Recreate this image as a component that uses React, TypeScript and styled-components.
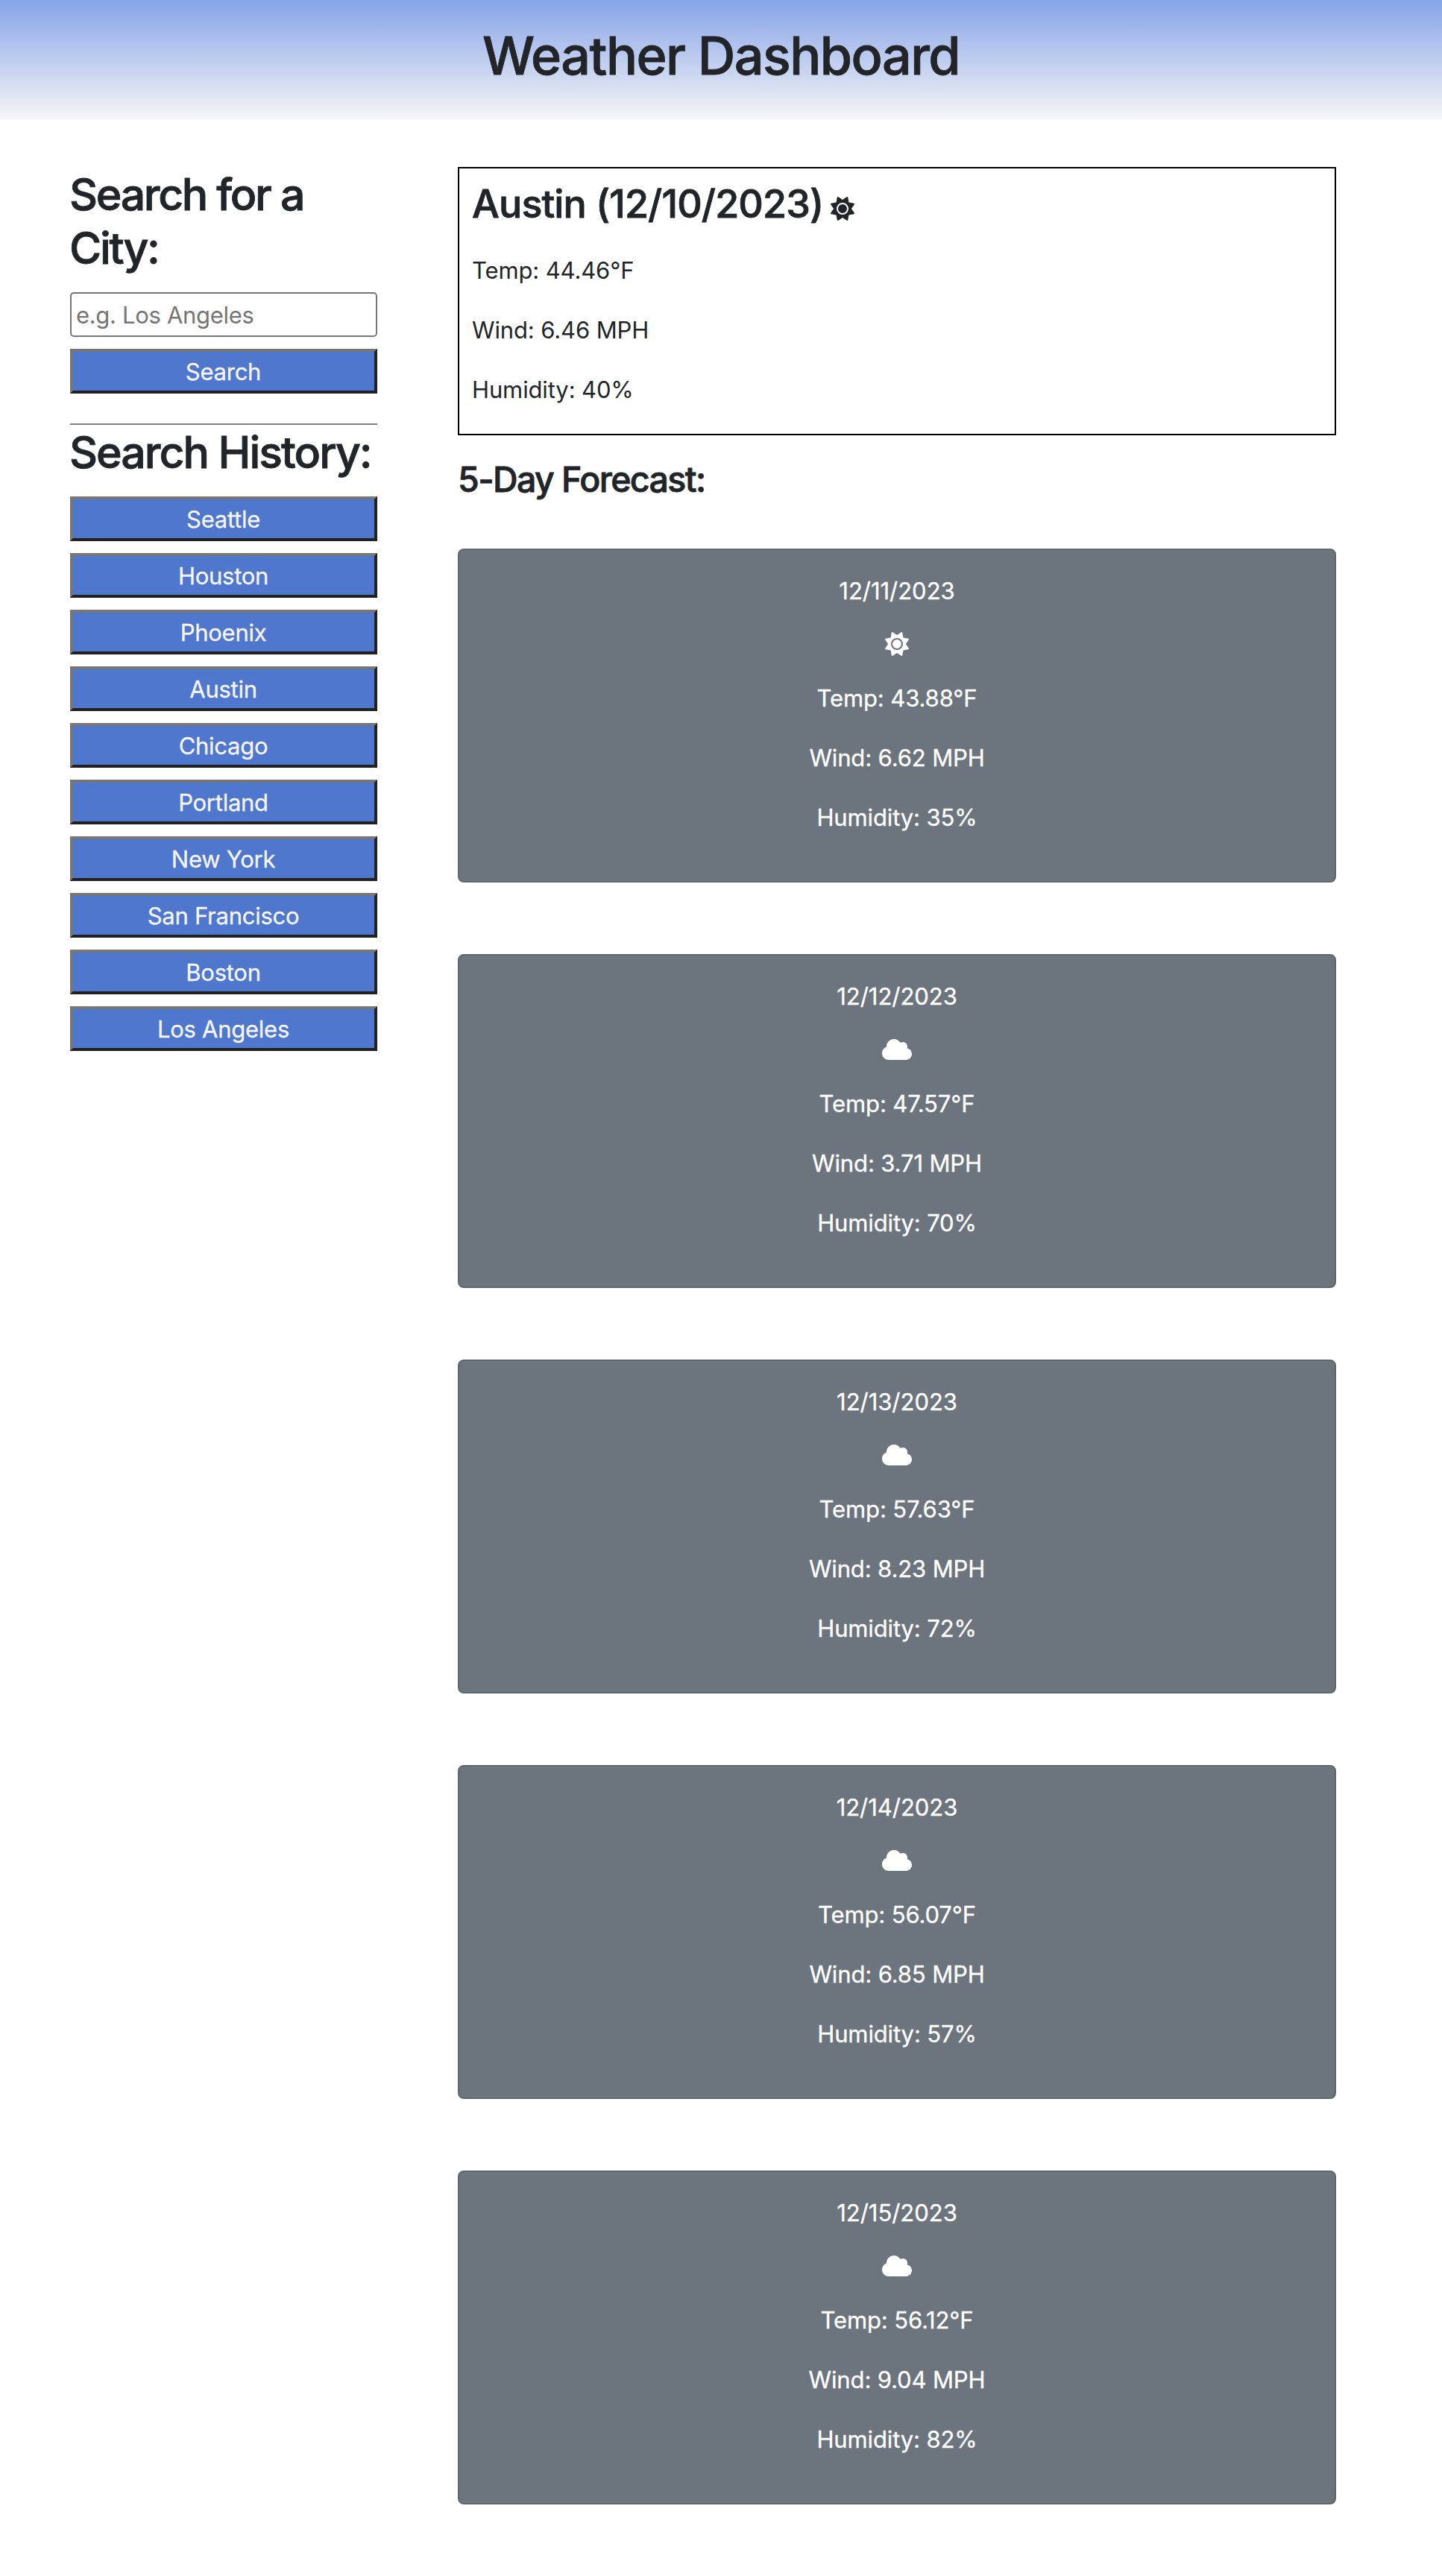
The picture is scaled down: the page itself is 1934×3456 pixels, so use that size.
import React from "react";
import styled, { createGlobalStyle } from "styled-components";
import { FaCloud, FaSun } from "react-icons/fa6";

const GlobalStyle = createGlobalStyle`
  *, *::before, *::after { box-sizing: border-box; }
  body {
    margin: 0;
    background: #fff;
    color: #212529;
    font-family: Inter, "Liberation Sans", sans-serif;
    font-size: 31px;
    font-weight: 400;
  }
  h1, h2, h3, h4, p { margin: 0; }
  h1, h2, h3, h4 {
    font-weight: 500;
    -webkit-text-stroke: 0.8px currentColor;
  }
`;

const Header = styled.header`
  display: flex;
  align-items: center;
  justify-content: center;
  height: 160px;
  padding-bottom: 11px;
  background: linear-gradient(to bottom, #87a4e8, #f5f5f5);
`;

const PageTitle = styled.h1`
  font-size: 70px;
  line-height: 84px;
  letter-spacing: -1.53px;
`;

const Layout = styled.div`
  display: grid;
  grid-template-columns: 412px 1178px;
  column-gap: 108px;
  align-items: start;
  padding: 64px 0 96px 94px;
`;

const Sidebar = styled.aside`
  display: flex;
  flex-direction: column;
`;

const SideHeading = styled.h2<{ $tracking: number }>`
  margin: 0 -10px 23px -1px;
  padding-top: 1px;
  font-size: 59px;
  line-height: 72px;
  letter-spacing: ${(p) => p.$tracking}px;
`;

const CityInput = styled.input`
  height: 60px;
  margin: 0 0 16px;
  padding: 0 6px;
  border: 2px solid #767676;
  border-radius: 5px;
  background: #fff;
  font: inherit;
  letter-spacing: -0.32px;
  &::placeholder { color: #757575; opacity: 1; }
`;

const CityButton = styled.button`
  height: 60px;
  padding: 0 1px 0 0;
  border: 4px solid;
  border-color: #767676 #212121 #212121 #767676;
  border-radius: 0;
  background: #4f77cd;
  color: #f5f5f5;
  font: inherit;
  letter-spacing: -0.26px;
  text-align: center;
  -webkit-text-stroke: 0.3px currentColor;
`;

const Divider = styled.hr`
  width: 100%;
  height: 2px;
  margin: 40px 0 0;
  border: 0;
  background: #808080;
`;

const History = styled.div`
  display: flex;
  flex-direction: column;
  gap: 16px;
`;

const Main = styled.main`
  display: flex;
  flex-direction: column;
`;

const Current = styled.section`
  height: 360px;
  padding: 16px 17px;
  border: 2px solid #000;
`;

const CurrentTitle = styled.h3`
  display: flex;
  align-items: center;
  gap: 10px;
  margin-bottom: 32px;
  font-size: 52px;
  line-height: 64px;
  letter-spacing: -0.88px;
  svg {
    width: 32px;
    height: 32px;
    margin-top: 12px;
    stroke: none;
    -webkit-text-stroke: 0;
  }
`;

const Reading = styled.p`
  margin-bottom: 30px;
  line-height: 50px;
  letter-spacing: -0.13px;
`;

const ForecastHeading = styled.h4`
  margin: 30px 0 64px;
  font-size: 46.5px;
  line-height: 58px;
  letter-spacing: -1.6px;
`;

const ForecastList = styled.div`
  display: flex;
  flex-direction: column;
  gap: 96px;
`;

const DayCard = styled.article`
  display: flex;
  flex-direction: column;
  align-items: center;
  height: 448px;
  padding-top: 30px;
  border: 2px solid #5f676e;
  border-radius: 8px;
  background: #6c757d;
  color: #fff;
  -webkit-text-stroke: 0.3px currentColor;
`;

const DayDate = styled(Reading)`
  letter-spacing: -0.03px;
`;

const DayIcon = styled.span`
  display: flex;
  height: 32px;
  margin-bottom: 32px;
`;

const SunIcon = styled(FaSun)`
  width: 32px;
  height: 32px;
`;

const CloudIcon = styled(FaCloud)`
  width: 40px;
  height: 32px;
`;

type Sky = "sun" | "cloud";

interface Day {
  date: string;
  sky: Sky;
  temp: string;
  wind: string;
  humidity: string;
}

const cities = [
  "Seattle",
  "Houston",
  "Phoenix",
  "Austin",
  "Chicago",
  "Portland",
  "New York",
  "San Francisco",
  "Boston",
  "Los Angeles",
];

const days: Day[] = [
  { date: "12/11/2023", sky: "sun", temp: "43.88", wind: "6.62", humidity: "35" },
  { date: "12/12/2023", sky: "cloud", temp: "47.57", wind: "3.71", humidity: "70" },
  { date: "12/13/2023", sky: "cloud", temp: "57.63", wind: "8.23", humidity: "72" },
  { date: "12/14/2023", sky: "cloud", temp: "56.07", wind: "6.85", humidity: "57" },
  { date: "12/15/2023", sky: "cloud", temp: "56.12", wind: "9.04", humidity: "82" },
];

function Readings({ temp, wind, humidity }: Pick<Day, "temp" | "wind" | "humidity">) {
  return (
    <>
      <Reading>{`Temp: ${temp}°F`}</Reading>
      <Reading>{`Wind: ${wind} MPH`}</Reading>
      <Reading>{`Humidity: ${humidity}%`}</Reading>
    </>
  );
}

export default function App() {
  return (
    <>
      <GlobalStyle />
      <Header>
        <PageTitle>Weather Dashboard</PageTitle>
      </Header>
      <Layout>
        <Sidebar>
          <SideHeading $tracking={-2.35}>Search for a City:</SideHeading>
          <CityInput placeholder="e.g. Los Angeles" />
          <CityButton>Search</CityButton>
          <Divider />
          <SideHeading $tracking={-2.03}>Search History:</SideHeading>
          <History>
            {cities.map((city) => (
              <CityButton key={city}>{city}</CityButton>
            ))}
          </History>
        </Sidebar>
        <Main>
          <Current>
            <CurrentTitle>
              Austin (12/10/2023)
              <FaSun />
            </CurrentTitle>
            <Readings temp="44.46" wind="6.46" humidity="40" />
          </Current>
          <ForecastHeading>5-Day Forecast:</ForecastHeading>
          <ForecastList>
            {days.map((day) => (
              <DayCard key={day.date}>
                <DayDate>{day.date}</DayDate>
                <DayIcon>{day.sky === "sun" ? <SunIcon /> : <CloudIcon />}</DayIcon>
                <Readings temp={day.temp} wind={day.wind} humidity={day.humidity} />
              </DayCard>
            ))}
          </ForecastList>
        </Main>
      </Layout>
    </>
  );
}
